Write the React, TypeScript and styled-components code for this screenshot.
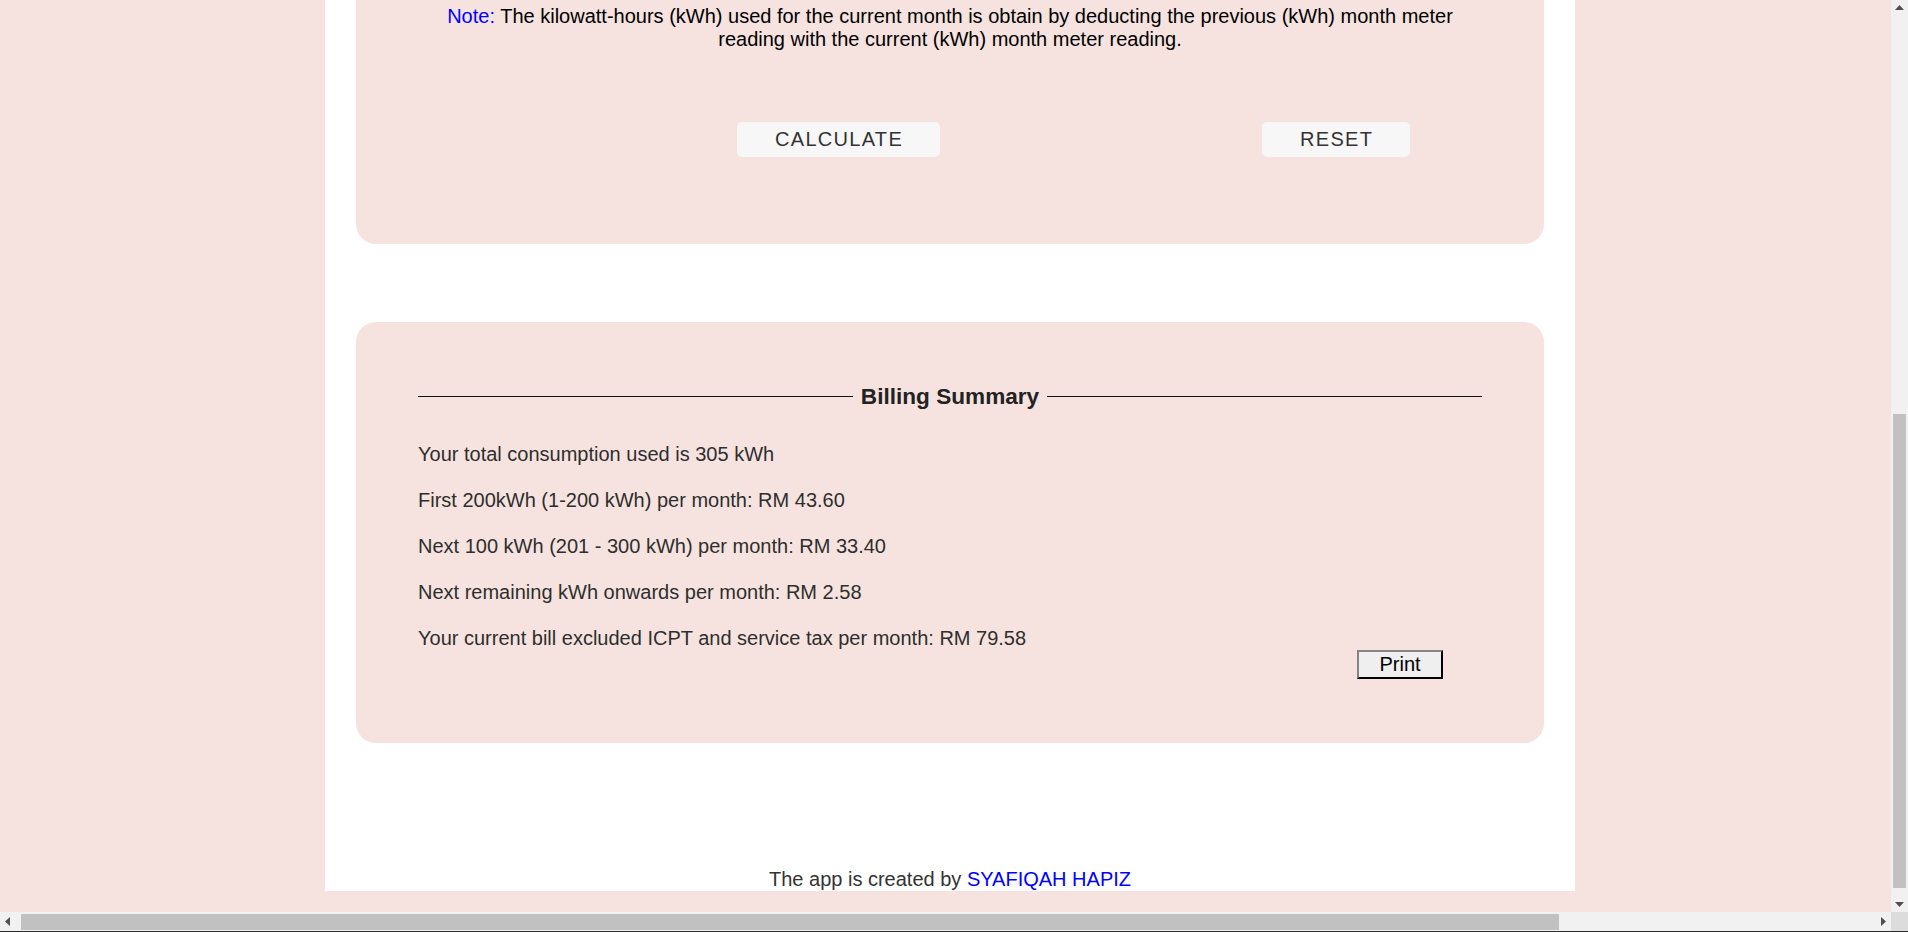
import React from "react";
import styled, { createGlobalStyle } from "styled-components";

const GlobalStyle = createGlobalStyle`
  html, body {
    margin: 0;
    padding: 0;
    overflow: hidden;
    background: #f6e3df;
    font-family: "Liberation Sans", Arial, Helvetica, sans-serif;
  }
`;

const PINK = "#f6e3df";

const Frame = styled.div`
  width: 1908px;
  height: 932px;
  display: grid;
  grid-template-columns: 1fr 17px;
  grid-template-rows: 1fr 20px;
  overflow: hidden;
`;

const Viewport = styled.div`
  background: ${PINK};
  overflow: hidden;
  min-width: 0;
  min-height: 0;
`;

const Sheet = styled.div`
  margin-left: 325px;
  width: 1250px;
  background: #ffffff;
  display: flex;
  flex-direction: column;
  padding: 0 31px;
  box-sizing: border-box;
`;

const Panel = styled.section<{ $top: number; $bottom: number }>`
  background: ${PINK};
  border-radius: 20px;
  padding: ${(p) => p.$top}px 62px ${(p) => p.$bottom}px;
`;

const TopPanel = styled(Panel)`
  margin-top: -25px;
`;

const SummaryPanel = styled(Panel)`
  margin-top: 78px;
`;

const Note = styled.p`
  margin: 0;
  font-size: 20px;
  line-height: 23px;
  color: #000;
  text-align: center;
`;

const Blue = styled.span`
  color: #0000ff;
`;

const ButtonRow = styled.div`
  display: flex;
  margin-top: 71px;
  margin-left: 319px;
  gap: 322px;
`;

const SoftButton = styled.button`
  height: 35px;
  padding: 0 37px 0 38px;
  border: none;
  border-radius: 5px;
  background: #f7f7f7;
  color: #333;
  font-family: "Liberation Sans", Arial, sans-serif;
  font-size: 20px;
  letter-spacing: 1.3px;
  cursor: pointer;
`;

const Heading = styled.div`
  display: flex;
  align-items: center;
  gap: 8px;
  font-size: 22.6px;
  line-height: 25px;
  font-weight: bold;
  color: #222;

  &::before,
  &::after {
    content: "";
    flex: 1;
    height: 1px;
    background: #111;
  }
`;

const Lines = styled.div`
  display: flex;
  flex-direction: column;
  gap: 23px;
  margin-top: 34px;
`;

const Line = styled.p`
  margin: 0;
  font-size: 20px;
  line-height: 23px;
  color: #2e2e2e;
`;

const PrintRow = styled.div`
  display: flex;
  justify-content: flex-end;
  padding-right: 39px;
  margin-top: 0;
`;

const PrintButton = styled.button`
  height: 29px;
  width: 86px;
  padding: 0;
  border: 2px outset #767676;
  border-color: #858585 #1f1f1f #1f1f1f #858585;
  background: #efefef;
  color: #000;
  font-family: "Liberation Sans", Arial, sans-serif;
  font-size: 20px;
  line-height: 23px;
`;

const Footer = styled.footer`
  margin-top: 125px;
  font-size: 20px;
  line-height: 23px;
  color: #333;
  text-align: center;
`;

const VScroll = styled.div`
  background: #f1f1f1;
  display: flex;
  flex-direction: column;
  align-items: center;
`;

const HScroll = styled.div`
  background: #f1f1f1;
  display: flex;
  align-items: center;
  border-bottom: 1px solid #2b2b2b;
  box-sizing: border-box;
`;

const Corner = styled.div`
  background: #dcdcdc;
  border-bottom: 1px solid #2b2b2b;
`;

const Arrow = styled.div`
  width: 17px;
  height: 17px;
  display: flex;
  align-items: center;
  justify-content: center;
  flex: none;
`;

const VTrack = styled.div`
  flex: 1;
  width: 100%;
  display: flex;
  flex-direction: column;
  align-items: center;
`;

const VThumb = styled.div`
  margin-top: 397px;
  width: 13px;
  height: 474px;
  background: #c1c1c1;
`;

const HTrack = styled.div`
  flex: 1;
  height: 100%;
  display: flex;
  align-items: center;
  padding-left: 4px;
`;

const HThumb = styled.div`
  width: 1538px;
  height: 16px;
  background: #c1c1c1;
`;

const Tri = ({ dir }: { dir: "up" | "down" | "left" | "right" }) => {
  const pts = {
    up: "4,10 8.5,5 13,10",
    down: "4,7 8.5,12 13,7",
    left: "10,4 5,8.5 10,13",
    right: "7,4 12,8.5 7,13",
  }[dir];
  return (
    <svg width="17" height="17" viewBox="0 0 17 17">
      <polygon points={pts} fill="#505050" />
    </svg>
  );
};

export default function App() {
  return (
    <>
      <GlobalStyle />
      <Frame>
        <Viewport>
          <Sheet>
            <TopPanel $top={30} $bottom={87}>
              <Note>
                <Blue>Note:</Blue> The kilowatt-hours (kWh) used for the current month is obtain by
                deducting the previous (kWh) month meter reading with the current (kWh) month meter
                reading.
              </Note>
              <ButtonRow>
                <SoftButton>CALCULATE</SoftButton>
                <SoftButton>RESET</SoftButton>
              </ButtonRow>
            </TopPanel>
            <SummaryPanel $top={62} $bottom={64}>
              <Heading>Billing Summary</Heading>
              <Lines>
                <Line>Your total consumption used is 305 kWh</Line>
                <Line>First 200kWh (1-200 kWh) per month: RM 43.60</Line>
                <Line>Next 100 kWh (201 - 300 kWh) per month: RM 33.40</Line>
                <Line>Next remaining kWh onwards per month: RM 2.58</Line>
                <Line>Your current bill excluded ICPT and service tax per month: RM 79.58</Line>
              </Lines>
              <PrintRow>
                <PrintButton>Print</PrintButton>
              </PrintRow>
            </SummaryPanel>
            <Footer>
              The app is created by <Blue>SYAFIQAH HAPIZ</Blue>
            </Footer>
          </Sheet>
        </Viewport>
        <VScroll>
          <Arrow>
            <Tri dir="up" />
          </Arrow>
          <VTrack>
            <VThumb />
          </VTrack>
          <Arrow>
            <Tri dir="down" />
          </Arrow>
        </VScroll>
        <HScroll>
          <Arrow>
            <Tri dir="left" />
          </Arrow>
          <HTrack>
            <HThumb />
          </HTrack>
          <Arrow>
            <Tri dir="right" />
          </Arrow>
        </HScroll>
        <Corner />
      </Frame>
    </>
  );
}
